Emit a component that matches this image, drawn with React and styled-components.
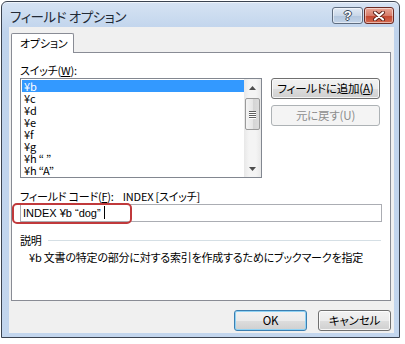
import React from "react";
import styled, { createGlobalStyle } from "styled-components";

const font = `"Noto Sans CJK JP", "Liberation Sans", sans-serif`;

const GlobalStyle = createGlobalStyle`
  * { box-sizing: border-box; }
  body {
    margin: 0;
    background: #ffffff;
    font-family: ${font};
    font-size: 11px;
    letter-spacing: -0.2px;
    font-feature-settings: "palt" 1;
    color: #000;
  }
`;

const switches = ["¥b", "¥c", "¥d", "¥e", "¥f", "¥g", "¥h “ ”", "¥h “A”"];

function App() {
  return (
    <>
      <GlobalStyle />
      <Window>
        <TitleBar>
          <Title>フィールド オプション</Title>
          <CaptionButtons>
            <HelpButton>?</HelpButton>
            <CloseButton>
              <svg width="14" height="10" viewBox="0 0 14 10">
                <path d="M3 1.5 L11 8.5 M11 1.5 L3 8.5" stroke="#5a2018" strokeWidth="4" strokeLinecap="round" />
                <path d="M3 1.5 L11 8.5 M11 1.5 L3 8.5" stroke="#ffffff" strokeWidth="2.2" strokeLinecap="round" />
              </svg>
            </CloseButton>
          </CaptionButtons>
        </TitleBar>
        <Client>
          <TabStrip>
            <Tab>オプション</Tab>
          </TabStrip>
          <Panel>
            <Label>
              スイッチ(<u>W</u>):
            </Label>
            <SwitchRow>
              <ListBox>
                <Rows>
                  {switches.map((s, i) => (
                    <Row key={s} $selected={i === 0}>
                      {s}
                    </Row>
                  ))}
                </Rows>
                <ScrollBar>
                  <Arrow>
                    <svg width="7" height="4" viewBox="0 0 7 4">
                      <path d="M0 4 L3.5 0 L7 4 Z" fill="#4d4d4d" />
                    </svg>
                  </Arrow>
                  <Thumb>
                    <Grip />
                    <Grip />
                    <Grip />
                    <Grip />
                  </Thumb>
                  <Track />
                  <Arrow>
                    <svg width="7" height="4" viewBox="0 0 7 4">
                      <path d="M0 0 L3.5 4 L7 0 Z" fill="#4d4d4d" />
                    </svg>
                  </Arrow>
                </ScrollBar>
              </ListBox>
              <SideButtons>
                <Button $width={109}>
                  フィールドに追加(<u>A</u>)
                </Button>
                <Button $width={109} disabled>
                  元に戻す(U)
                </Button>
              </SideButtons>
            </SwitchRow>
            <CodeLabel>
              <span>
                フィールド コード(<u>F</u>):
              </span>
              <span>INDEX [スイッチ]</span>
            </CodeLabel>
            <Field>
              <Input>
                INDEX ¥b “dog”<Caret />
              </Input>
              <Highlight />
            </Field>
            <Section>
              <span>説明</span>
              <Rule />
            </Section>
            <Description>¥b 文書の特定の部分に対する索引を作成するためにブックマークを指定</Description>
          </Panel>
          <Footer>
            <Button $width={73} $default>
              OK
            </Button>
            <Button $width={73}>キャンセル</Button>
          </Footer>
        </Client>
      </Window>
    </>
  );
}

const Window = styled.div`
  margin: 1px 0 0 1px;
  width: 399px;
  height: 337px;
  border: 1px solid #3b4350;
  border-radius: 6px 6px 0 0;
  background: linear-gradient(#d6e3f3, #bfd3ec 30px, #c3d6ee);
  padding: 0 5px 4px 7px;
  display: flex;
  flex-direction: column;
  box-shadow: inset 0 1px 0 #eef4fb;
`;

const TitleBar = styled.div`
  height: 25px;
  display: flex;
  align-items: flex-start;
  justify-content: space-between;
`;

const Title = styled.div`
  font-size: 13.5px;
  letter-spacing: -0.4px;
  line-height: 16px;
  margin-top: 6px;
  margin-left: 1px;
  color: #222a36;
`;

const CaptionButtons = styled.div`
  display: flex;
  gap: 1px;
  margin-top: 5px;
`;

const CaptionButton = styled.div`
  height: 17px;
  border: 1px solid #5f6d80;
  border-radius: 3px;
  display: flex;
  align-items: center;
  justify-content: center;
  box-shadow: inset 0 0 0 1px rgba(255, 255, 255, 0.5);
`;

const HelpButton = styled(CaptionButton)`
  width: 31px;
  background: linear-gradient(#e3ebf5, #cad8e9 50%, #b3c6dd 51%, #c3d4e8);
  font-family: "Liberation Sans", sans-serif;
  font-weight: bold;
  font-size: 13px;
  color: #ffffff;
  text-shadow: 0 0 1px #3d4a5b, 1px 0 0 #3d4a5b, -1px 0 0 #3d4a5b, 0 1px 0 #3d4a5b, 0 -1px 0 #3d4a5b;
`;

const CloseButton = styled(CaptionButton)`
  width: 30px;
  border-color: #6b2a22;
  background: linear-gradient(#eaa898, #d77d6b 50%, #c2452f 51%, #d46a50);
`;

const Client = styled.div`
  height: 306px;
  background: #f0f0f0;
  padding: 6px 3px 0 2px;
  display: flex;
  flex-direction: column;
`;

const TabStrip = styled.div`
  display: flex;
  margin-bottom: -1px;
  position: relative;
  z-index: 1;
`;

const Tab = styled.div`
  width: 63px;
  height: 20px;
  background: #ffffff;
  border: 1px solid #898c95;
  border-bottom: none;
  border-radius: 2px 2px 0 0;
  padding-left: 8px;
  line-height: 19px;
  white-space: nowrap;
`;

const Panel = styled.div`
  height: 249px;
  background: #ffffff;
  border: 1px solid #898c95;
  padding: 10px 8px 0 8px;
  display: flex;
  flex-direction: column;
`;

const Label = styled.div`
  line-height: 14px;
  margin-bottom: 1px;
  u {
    text-underline-offset: 1px;
  }
`;

const SwitchRow = styled.div`
  display: flex;
  gap: 9px;
`;

const ListBox = styled.div`
  width: 242px;
  height: 100px;
  border: 1px solid #828790;
  display: flex;
`;

const Rows = styled.div`
  flex: 1;
  padding: 1px 0 0 1px;
`;

const Row = styled.div`
  height: 12px;
  line-height: 12px;
  padding-left: 2px;
  background: ${(p) => (p.$selected ? "#3399ff" : "transparent")};
  color: ${(p) => (p.$selected ? "#ffffff" : "#000000")};
  white-space: pre;
`;

const ScrollBar = styled.div`
  width: 17px;
  display: flex;
  flex-direction: column;
  background: linear-gradient(90deg, #e8e8e8, #f4f4f4 30%, #f4f4f4 70%, #e8e8e8);
`;

const Arrow = styled.div`
  height: 17px;
  display: flex;
  align-items: center;
  justify-content: center;
`;

const Thumb = styled.div`
  height: 32px;
  margin: 2px 1px 0;
  border: 1px solid #9a9a9a;
  border-radius: 2px;
  background: linear-gradient(90deg, #f4f4f4, #e6e6e6 50%, #d4d4d4 51%, #dcdcdc);
  display: flex;
  flex-direction: column;
  align-items: center;
  justify-content: center;
  gap: 1px;
`;

const Grip = styled.div`
  width: 7px;
  height: 1px;
  background: #5e5e5e;
  box-shadow: 0 1px 0 #ffffff;
`;

const Track = styled.div`
  flex: 1;
`;

const SideButtons = styled.div`
  display: flex;
  flex-direction: column;
  gap: 6px;
`;

const Button = styled.button`
  width: ${(p) => p.$width}px;
  height: 21px;
  padding: 0;
  font-family: ${font};
  font-size: 11.5px;
  letter-spacing: -0.2px;
  font-feature-settings: "palt" 1;
  line-height: 19px;
  white-space: nowrap;
  color: #000;
  border: 1px solid ${(p) => (p.$default ? "#3c7fb1" : "#707070")};
  border-radius: 3px;
  background: linear-gradient(#f2f2f2, #ebebeb 50%, #dddddd 51%, #cfcfcf);
  box-shadow: inset 0 0 0 1px ${(p) => (p.$default ? "#8fd2f4" : "rgba(255, 255, 255, 0.8)")};
  u {
    text-underline-offset: 1px;
  }
  &:disabled {
    color: #8d8d8d;
    border-color: #adb2b5;
    background: #f4f4f4;
    box-shadow: none;
  }
`;

const CodeLabel = styled.div`
  margin-top: 11px;
  line-height: 14px;
  display: flex;
  gap: 9px;
  u {
    text-underline-offset: 1px;
  }
`;

const Field = styled.div`
  position: relative;
  margin-top: 1px;
`;

const Input = styled.div`
  width: 362px;
  height: 18px;
  border: 1px solid #abadb3;
  padding-left: 2px;
  font-family: "Liberation Sans", "Noto Sans CJK JP", sans-serif;
  letter-spacing: 0;
  line-height: 16px;
  white-space: nowrap;
`;

const Caret = styled.span`
  display: inline-block;
  width: 1px;
  height: 13px;
  margin-left: 3px;
  vertical-align: -2px;
  background: #000;
`;

const Highlight = styled.div`
  position: absolute;
  left: -8px;
  top: -1px;
  width: 120px;
  height: 21px;
  border: 2px solid #c0393b;
  border-radius: 5px;
`;

const Section = styled.div`
  margin-top: 11px;
  line-height: 14px;
  display: flex;
  align-items: center;
  gap: 6px;
`;

const Rule = styled.div`
  flex: 1;
  height: 1px;
  margin-right: 1px;
  background: #d5dfe5;
`;

const Description = styled.div`
  margin-top: 3px;
  margin-left: 9px;
  line-height: 14px;
  white-space: nowrap;
`;

const Footer = styled.div`
  margin-top: 9px;
  display: flex;
  justify-content: flex-end;
  gap: 11px;
`;

export default App;
